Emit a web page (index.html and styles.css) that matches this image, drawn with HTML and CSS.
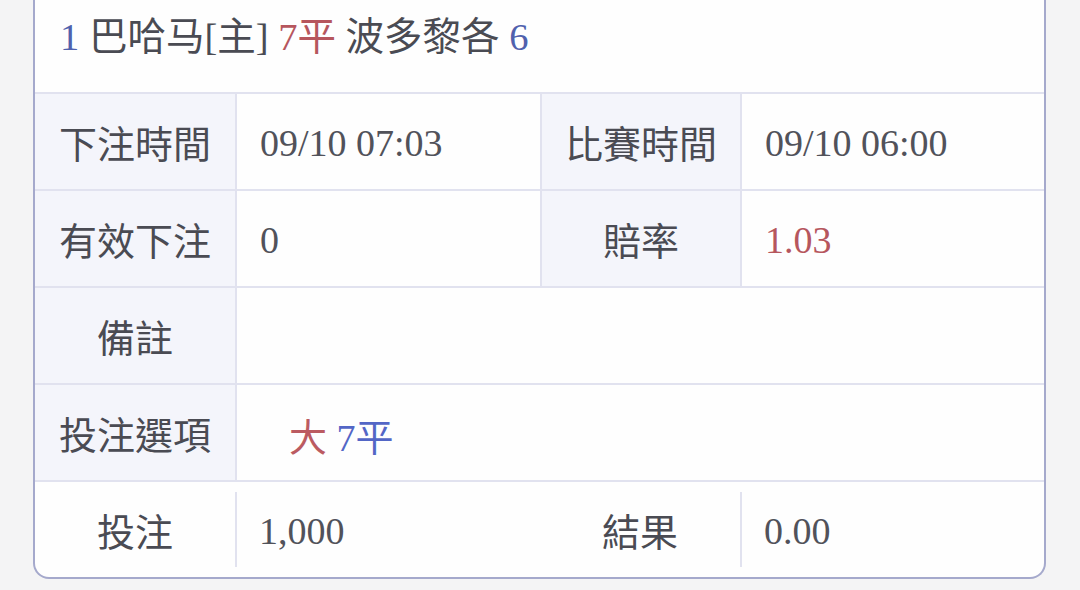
FILE: index.html
```html
<!DOCTYPE html>
<html lang="zh-Hant">
<head>
<meta charset="utf-8">
<link rel="stylesheet" href="styles.css">
</head>
<body>
<div class="card">
  <div class="header">
    <span class="blue">1</span> 巴哈马[主] <span class="red">7平</span> 波多黎各 <span class="blue">6</span>
  </div>
  <div class="grid">
    <div class="label">下注時間</div>
    <div class="value">09/10 07:03</div>
    <div class="label">比賽時間</div>
    <div class="value">09/10 06:00</div>

    <div class="label">有效下注</div>
    <div class="value">0</div>
    <div class="label">賠率</div>
    <div class="value red">1.03</div>

    <div class="label">備註</div>
    <div class="value wide"></div>

    <div class="label">投注選項</div>
    <div class="value wide"><span class="pick"><span class="red2">大</span> <span class="blue2">7平</span></span></div>
  </div>
  <div class="last">
    <div class="label plain">投注</div>
    <div class="value sep">1,000</div>
    <div class="label plain">結果</div>
    <div class="value sep">0.00</div>
  </div>
</div>
</body>
</html>
```

FILE: styles.css
```css
html, body {
  margin: 0;
  padding: 0;
}
body {
  background: #f4f4f5;
  font-family: "Liberation Serif", "Noto Sans CJK TC", serif;
  font-size: 38px;
  color: #4c4d56;
  width: 1080px;
  height: 590px;
  overflow: hidden;
}
.card {
  margin-left: 33px;
  width: 1013px;
  box-sizing: border-box;
  background: #fefefe;
  border: 2px solid #a5a9cc;
  border-top: none;
  border-radius: 0 0 16px 16px;
  overflow: hidden;
}
.header {
  height: 94px;
  box-sizing: border-box;
  padding: 13px 0 0 25px;
  font-size: 38.5px;
  line-height: 48px;
  border-bottom: 2px solid #e1e2ef;
  color: #4a4b53;
  white-space: nowrap;
}
.blue { color: #5061ad; }
.red { color: #b6565d; }
.red2 { color: #bb5b61; }
.blue2 { color: #5366c6; }
.grid {
  display: grid;
  grid-template-columns: 200px 303px 198px 302px;
  grid-auto-rows: 95px;
  gap: 2px;
  background: #e1e2ef;
  border-bottom: 2px solid #e1e2ef;
}
.label {
  background: #f4f5fb;
  display: flex;
  align-items: center;
  justify-content: center;
  color: #4a4b53;
}
.value {
  background: #fefefe;
  display: flex;
  align-items: center;
  padding-left: 23px;
  padding-top: 3px;
  color: #51525a;
  white-space: pre;
}
.value.red { color: #b6565d; }
.wide { grid-column: 2 / 5; }
.pick { margin-left: 29px; }
.last {
  display: grid;
  grid-template-columns: 200px 305px 200px 304px;
  height: 95px;
}
.label.plain { background: transparent; }
.sep {
  background: transparent;
  margin: 10px 0;
  border-left: 2px solid #e1e2ef;
  padding-left: 22px;
}
```
